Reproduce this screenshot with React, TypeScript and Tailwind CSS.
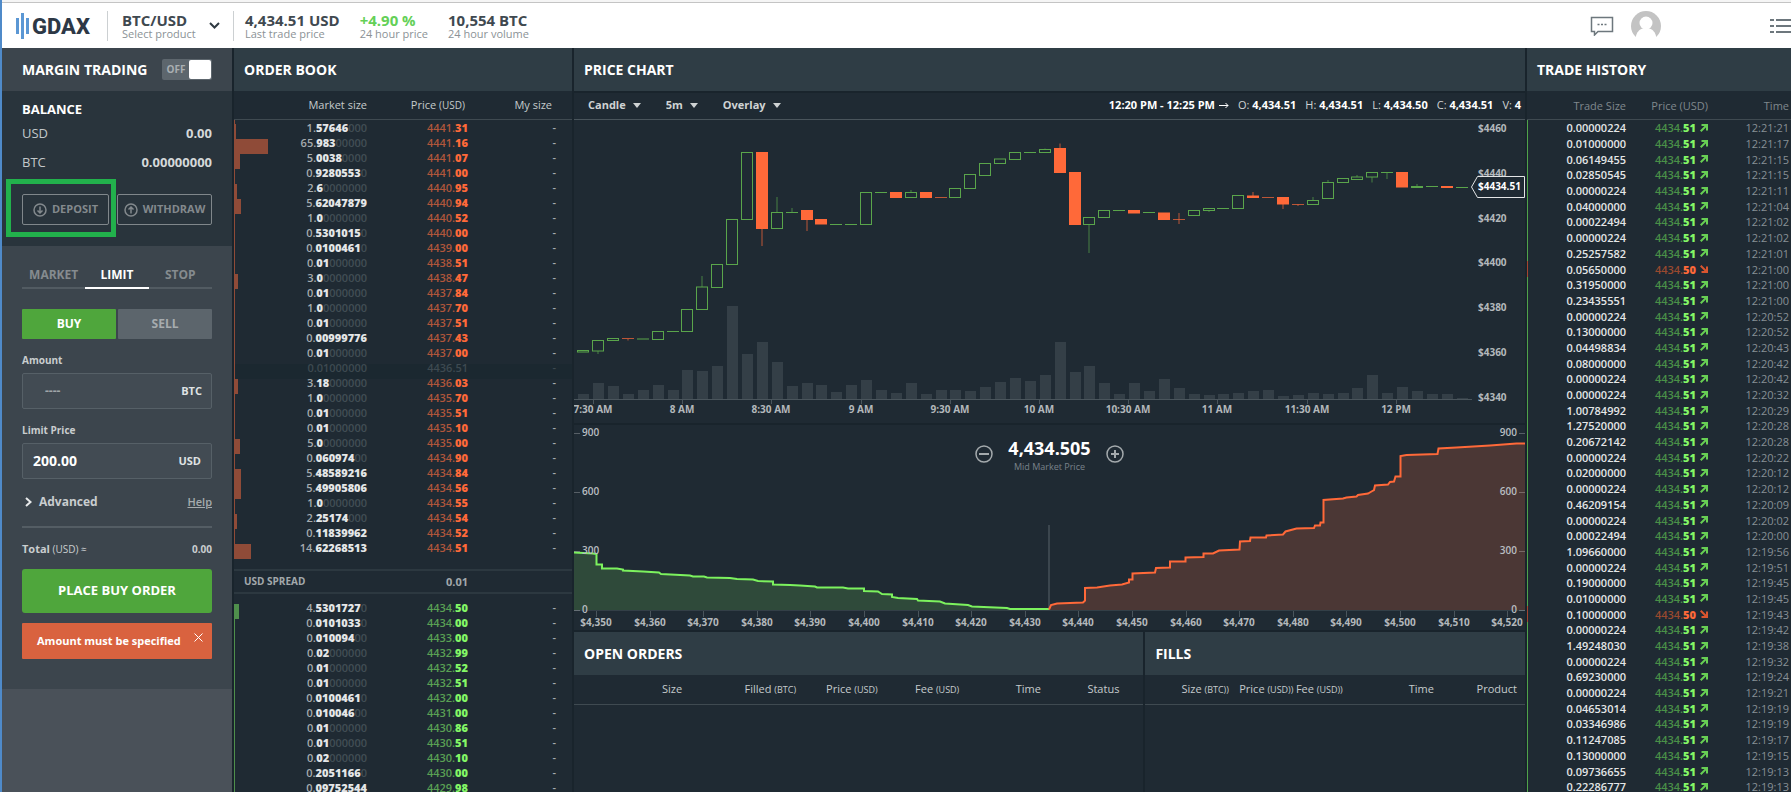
import { useState } from "react";

type Level = [size: string, price: string, bar: number];
type Trade = [size: string, time: string, down?: boolean];
type Candle = {
  up: boolean;
  top: number;
  bottom: number;
  high?: number;
  low?: number;
  volume: number;
};

const ASKS: Level[] = [
  ["1.57646000", "4441.31", 1],
  ["65.98300000", "4441.16", 33],
  ["5.00380000", "4441.07", 5],
  ["0.92805530", "4441.00", 0],
  ["2.60000000", "4440.95", 2],
  ["5.62047879", "4440.94", 6],
  ["1.00000000", "4440.52", 0],
  ["0.53010150", "4440.00", 0],
  ["0.01004610", "4439.00", 0],
  ["0.01000000", "4438.51", 0],
  ["3.00000000", "4438.47", 3],
  ["0.01000000", "4437.84", 0],
  ["1.00000000", "4437.70", 0],
  ["0.01000000", "4437.51", 0],
  ["0.00999776", "4437.43", 0],
  ["0.01000000", "4437.00", 0],
  ["0.01000000", "4436.51", 0],
  ["3.18000000", "4436.03", 3],
  ["1.00000000", "4435.70", 0],
  ["0.01000000", "4435.51", 0],
  ["0.01000000", "4435.10", 0],
  ["5.00000000", "4435.00", 5],
  ["0.06097400", "4434.90", 0],
  ["5.48589216", "4434.84", 6],
  ["5.49905806", "4434.56", 6],
  ["1.00000000", "4434.55", 0],
  ["2.25174000", "4434.54", 2],
  ["0.11839962", "4434.52", 0],
  ["14.62268513", "4434.51", 16],
];

const BIDS: Level[] = [
  ["4.53017270", "4434.50", 4],
  ["0.01010330", "4434.00", 0],
  ["0.01009400", "4433.00", 0],
  ["0.02000000", "4432.99", 0],
  ["0.01000000", "4432.52", 0],
  ["0.01000000", "4432.51", 0],
  ["0.01004610", "4432.00", 0],
  ["0.01004600", "4431.00", 0],
  ["0.01000000", "4430.86", 0],
  ["0.01000000", "4430.51", 0],
  ["0.02000000", "4430.10", 0],
  ["0.20511660", "4430.00", 0],
  ["0.09752544", "4429.98", 0],
];

// price of the level that is being removed from the book
const FADED_PRICE = "4436.51";

const TRADES: Trade[] = [
  ["0.00000224", "12:21:21"],
  ["0.01000000", "12:21:17"],
  ["0.06149455", "12:21:15"],
  ["0.02850545", "12:21:15"],
  ["0.00000224", "12:21:11"],
  ["0.04000000", "12:21:04"],
  ["0.00022494", "12:21:02"],
  ["0.00000224", "12:21:02"],
  ["0.25257582", "12:21:01"],
  ["0.05650000", "12:21:00", true],
  ["0.31950000", "12:21:00"],
  ["0.23435551", "12:21:00"],
  ["0.00000224", "12:20:52"],
  ["0.13000000", "12:20:52"],
  ["0.04498834", "12:20:43"],
  ["0.08000000", "12:20:42"],
  ["0.00000224", "12:20:42"],
  ["0.00000224", "12:20:32"],
  ["1.00784992", "12:20:29"],
  ["1.27520000", "12:20:28"],
  ["0.20672142", "12:20:28"],
  ["0.00000224", "12:20:22"],
  ["0.02000000", "12:20:12"],
  ["0.00000224", "12:20:12"],
  ["0.46209154", "12:20:09"],
  ["0.00000224", "12:20:02"],
  ["0.00022494", "12:20:00"],
  ["1.09660000", "12:19:56"],
  ["0.00000224", "12:19:51"],
  ["0.19000000", "12:19:45"],
  ["0.01000000", "12:19:45"],
  ["0.10000000", "12:19:43", true],
  ["0.00000224", "12:19:42"],
  ["1.49248030", "12:19:38"],
  ["0.00000224", "12:19:32"],
  ["0.69230000", "12:19:24"],
  ["0.00000224", "12:19:21"],
  ["0.04653014", "12:19:19"],
  ["0.03346986", "12:19:19"],
  ["0.11247085", "12:19:17"],
  ["0.13000000", "12:19:15"],
  ["0.09736655", "12:19:13"],
  ["0.22286777", "12:19:13"],
];

function up(top: number, bottom: number, volume: number, high?: number, low?: number): Candle {
  return { up: true, top, bottom, high, low, volume };
}

function down(top: number, bottom: number, volume: number, high?: number, low?: number): Candle {
  return { up: false, top, bottom, high, low, volume };
}

// one candle per five minutes, starting at 7:25
const CANDLES: Candle[] = [
  up(230.5, 232, 5),
  up(220.5, 231, 16, undefined, 234),
  up(218.5, 220.5, 13),
  down(218.5, 219, 5, undefined, 220.5),
  up(219, 219, 9),
  up(211.5, 219.5, 14),
  up(211.5, 211.5, 9),
  up(189.5, 211.5, 29),
  up(167, 189.5, 28, 156),
  up(144.5, 167.5, 33),
  up(99.5, 144.5, 93),
  up(32.5, 99.5, 45),
  down(32.5, 108.5, 57, undefined, 126),
  up(92.5, 108.5, 37, 77),
  up(92.5, 92.5, 13, 88),
  down(90.5, 99.5, 16, undefined, 111),
  down(99.5, 104, 14),
  up(104.5, 104.5, 7),
  up(104.5, 104.5, 14),
  up(72.5, 104.5, 19),
  up(72.5, 72.5, 9),
  down(72.5, 77.5, 6),
  up(72.5, 77.5, 16, 70),
  down(72.5, 77.5, 5),
  down(77.5, 77.5, 9),
  up(68.5, 77.5, 9),
  up(54.5, 68.5, 8),
  up(43.5, 55.5, 12),
  up(39, 43.5, 17),
  up(32.5, 39.5, 21),
  up(32.5, 32.5, 18),
  up(29.5, 32.5, 24, 28.5),
  down(28.5, 52.5, 57, 23.5),
  down(52.5, 104.5, 27),
  up(97.5, 104.5, 33, undefined, 133),
  up(90.5, 97.5, 16),
  up(90.5, 90.5, 5),
  down(90.5, 93, 16),
  up(92.5, 92.5, 8),
  down(93, 99.5, 20),
  down(99.5, 99.5, 11, 93, 104),
  up(90.5, 95.5, 5),
  up(88.5, 90.5, 4, undefined, 92),
  up(88.5, 88.5, 5),
  up(75.5, 88.5, 6),
  down(76, 77.5, 8, 72),
  down(77.5, 77.5, 9),
  down(77.5, 84, 3, undefined, 89),
  down(84.5, 84.5, 4, undefined, 86),
  up(80.5, 84.5, 6, 77),
  up(62.5, 78.5, 5, 60),
  up(58.5, 62.5, 6),
  up(57, 59.5, 11, 55),
  up(52.5, 57, 24, undefined, 62.5),
  up(52.5, 52.5, 6, undefined, 59),
  down(52.5, 67, 12),
  up(66.5, 67.5, 8, 64),
  up(66.5, 66.5, 5),
  down(66.5, 67.5, 5),
  up(67.5, 67.5, 1),
];

const TIMES = [
  "7:30 AM", "8 AM", "8:30 AM", "9 AM", "9:30 AM",
  "10 AM", "10:30 AM", "11 AM", "11:30 AM", "12 PM",
];
const PRICES = [4460, 4440, 4420, 4400, 4380, 4360, 4340];

const BID_POINTS =
  "0,127.5 19,128.5 22.5,129 22.5,139.5 28,139.5 28,143.5 43,143.5 49,144.5 49,145.5 69,146.5 85,147.5 87,149 116,150.5 119,151.5 130,151.5 133,152.5 156,153 163,154 179,154.5 184,156 199,156.5 199,159.5 216,160 226,160.5 241,161.5 243,162.5 269,162.5 274,163.5 290,163.5 290,166 304,166.5 308,169 318,169.5 318,172 324,173 343,174 344,175.5 366,176.5 371,178.5 394,180 398,181.5 433,183 436,184 475,184";
const ASK_POINTS =
  "475,184.5 477,180 483,178.5 509,177.5 511,175.5 511,163 523,162.5 536,160.5 548,159.5 555,157.5 555,154.5 558.5,154.5 558.5,148.5 581,147.5 582,143 596,142.5 596,136.5 611.5,136.5 611.5,132.5 629.5,132 629.5,128.5 639,128.5 645,125.5 665.5,124.5 666,116.5 676,116 676.5,112.5 692,112.5 692.5,110.5 709,109.5 711.5,106.5 722.5,103.5 740,103 741,100.5 746,100.5 746.5,97.5 749.5,97.5 749.5,75 769,73.5 772.5,72.5 782.5,71.5 784,70 794,68.5 797.5,66.5 800,65 801,60.5 814,59.5 816,57 820,56.5 821.5,51.5 826.5,51.5 826.5,31 832.5,30 863.5,29 864.5,23.5 882.5,22.5 916,20.5 942.5,18.5 951,18.5";

const DEPTH_LEVELS = [
  { label: "900", y: 8 },
  { label: "600", y: 67 },
  { label: "300", y: 126 },
  { label: "0", y: 185 },
];

function PanelHeader({ title }: { title: string }) {
  return (
    <h2 className="flex h-[43px] shrink-0 items-center bg-[#2f3d45] px-[10px] text-sm font-bold text-white">
      {title}
    </h2>
  );
}

function Logo() {
  return (
    <svg width="78" height="26" viewBox="0 0 78 26" role="img" aria-label="GDAX">
      <rect x="2" y="5" width="3" height="16" fill="#5b97d4" />
      <rect x="7" y="0" width="3" height="26" fill="#5b97d4" />
      <rect x="12" y="5" width="3" height="16" fill="#5b97d4" />
      <text x="18" y="21" fontFamily="Roboto, sans-serif" fontSize="22" fontWeight="800" fill="#2d3846">
        GDAX
      </text>
    </svg>
  );
}

function Header() {
  return (
    <header className="flex h-12 shrink-0 items-center border-t-2 border-[#f5f5f5] bg-white">
      <div className="flex h-full flex-1 items-center border-t border-[#c4c4c4]">
        <a href="#" className="ml-[12px]">
          <Logo />
        </a>

        <button
          type="button"
          className="ml-[15px] flex h-[30px] items-center border-x border-[#ccd0d2] pr-[13px] pl-[14px] text-left"
        >
          <span className="w-[87px]">
            <span className="block text-[15px] leading-4 font-bold text-[#3f4950]">BTC/USD</span>
            <span className="block text-[11px] leading-3 text-[#8b9296]">Select product</span>
          </span>
          <svg width="11" height="7" viewBox="0 0 11 7" fill="none" stroke="#2f3a42" strokeWidth="2">
            <path d="M1 1l4.500 4.500L10 1" />
          </svg>
        </button>

        <dl className="flex flex-1 gap-5 pl-[11px]">
          <Stat value="4,434.51 USD" label="Last trade price" />
          <Stat value="+4.90 %" label="24 hour price" positive />
          <Stat value="10,554 BTC" label="24 hour volume" />
        </dl>

        <button type="button" aria-label="Chat" className="mr-[17px]">
          <svg width="24" height="20" viewBox="0 0 24 20" fill="none" stroke="#6d777d" strokeWidth="1.500">
            <path d="M1.500 1.500h21v14H8l-3.500 3.500v-3.500h-3z" />
            <path d="M7.500 8.500h2M11 8.500h2M14.500 8.500h2" strokeWidth="1.500" />
          </svg>
        </button>
        <button type="button" aria-label="Account" className="mr-[109px]">
          <svg width="30" height="30" viewBox="0 0 30 30">
            <circle cx="15" cy="15" r="15" fill="#c3c3c3" />
            <circle cx="15" cy="12" r="6.500" fill="#fff" />
            <path d="M4.500 27c1-6 4-8.500 7-9.500h7c3 1 6 3.500 7 9.500l-4 3h-13z" fill="#fff" />
          </svg>
        </button>
        <button type="button" aria-label="Menu">
          <svg width="21" height="14" viewBox="0 0 21 14" stroke="#6d777d" strokeWidth="2">
            <path d="M0 1h4M6 1h15M0 7h4M6 7h15M0 13h4M6 13h15" />
          </svg>
        </button>
      </div>
    </header>
  );
}

function Stat({ value, label, positive }: { value: string; label: string; positive?: boolean }) {
  return (
    <div className="flex flex-col-reverse">
      <dt className="text-[11px] leading-3 text-[#8b9296]">{label}</dt>
      <dd
        className={
          positive
            ? "text-[15px] leading-4 font-bold text-[#64d057]"
            : "text-[15px] leading-4 font-bold text-[#3f4950]"
        }
      >
        {value}
      </dd>
    </div>
  );
}

function CircleArrow({ flip }: { flip?: boolean }) {
  return (
    <svg width="14" height="14" viewBox="0 0 14 14" fill="none" stroke="currentColor" strokeWidth="1.500">
      <circle cx="7" cy="7" r="6" />
      {flip ? <path d="M7 10.500V4M4.500 6.500L7 4l2.500 2.500" /> : <path d="M7 3.500V10M4.500 7.500L7 10l2.500-2.500" />}
    </svg>
  );
}

function Sidebar() {
  const [margin, setMargin] = useState(false);
  const [tab, setTab] = useState("LIMIT");
  const [side, setSide] = useState("BUY");
  const [amount, setAmount] = useState("");
  const [price, setPrice] = useState("200.00");
  const [showError, setShowError] = useState(true);

  return (
    <aside className="w-[230px] shrink-0 overflow-hidden bg-[#4a5159]">
      <div className="flex h-[43px] items-center justify-between bg-[#3c454d] px-5">
        <h2 className="text-sm font-bold text-white">MARGIN TRADING</h2>
        <label className="flex h-[21px] w-[50px] items-center rounded-xs bg-[#5d666d] p-px text-[10px] font-bold text-[#a9afb2]">
          <input
            type="checkbox"
            className="sr-only"
            aria-label="Margin trading"
            checked={margin}
            onChange={(e) => setMargin(e.target.checked)}
          />
          <span className="flex-1 text-center">{margin ? "ON" : "OFF"}</span>
          <span className="h-full w-[22px] rounded-xs bg-white" />
        </label>
      </div>

      <section className="bg-[#29343c] px-5 pt-[10px] pb-[21px] text-[13px] text-[#c3c8ca]">
        <h3 className="leading-4 font-bold text-white">BALANCE</h3>
        <dl>
          <div className="mt-[6px] flex justify-between leading-5">
            <dt>USD</dt>
            <dd className="font-bold text-[#d5d9da]">0.00</dd>
          </div>
          <div className="mt-[9px] flex justify-between leading-5">
            <dt>BTC</dt>
            <dd className="font-bold text-[#d5d9da]">0.00000000</dd>
          </div>
        </dl>
        <div className="mt-[22px] flex gap-2 text-[11px] font-bold text-[#83898d]">
          <div className="relative">
            <button
              type="button"
              className="flex h-[31px] w-[87px] items-center justify-center gap-[5px] rounded-xs border border-[#80878b]"
            >
              <CircleArrow />
              DEPOSIT
            </button>
            {/* tutorial highlight */}
            <span className="pointer-events-none absolute -top-[15px] -right-[7px] -bottom-3 -left-4 border-[5px] border-[#22b14c]" />
          </div>
          <button
            type="button"
            className="flex h-[31px] flex-1 items-center justify-center gap-[5px] rounded-xs border border-[#80878b]"
          >
            <CircleArrow flip />
            WITHDRAW
          </button>
        </div>
      </section>

      <form className="bg-[#3c454d] px-5 pt-[17px] pb-[30px] text-[#c9cdcf]" onSubmit={(e) => e.preventDefault()}>
        <div className="grid grid-cols-3 text-xs font-bold">
          {["MARKET", "LIMIT", "STOP"].map((name) => (
            <button
              key={name}
              type="button"
              onClick={() => setTab(name)}
              className={
                tab === name
                  ? "border-b-2 border-white leading-6 text-white"
                  : "border-b-2 border-[#525b62] leading-6 text-[#858b8f]"
              }
            >
              {name}
            </button>
          ))}
        </div>

        <div className="mt-5 grid grid-cols-2 gap-[2px] text-xs font-bold">
          {["BUY", "SELL"].map((name) => (
            <button
              key={name}
              type="button"
              onClick={() => setSide(name)}
              className={
                side === name
                  ? "h-[30px] rounded-[1px] bg-[#4fa63c] text-white"
                  : "h-[30px] rounded-[1px] bg-[#5c656c] text-[#a7acaf]"
              }
            >
              {name}
            </button>
          ))}
        </div>

        <label htmlFor="amount" className="mt-[13px] block text-[10px] leading-4 font-bold">
          Amount
        </label>
        <div className="mt-[5px] flex h-9 items-center rounded-xs border border-[#566067] bg-[#424b53] pr-[9px] pl-[22px]">
          <input
            id="amount"
            value={amount}
            placeholder="----"
            onChange={(e) => setAmount(e.target.value)}
            className="w-full min-w-0 text-xs font-bold text-white outline-none placeholder:text-[#a0a6a9]"
          />
          <span className="text-[11px] font-bold text-[#dfe2e3]">BTC</span>
        </div>

        <label htmlFor="price" className="mt-[13px] block text-[10px] leading-4 font-bold">
          Limit Price
        </label>
        <div className="mt-[5px] flex h-9 items-center rounded-xs border border-[#566067] bg-[#424b53] px-[10px]">
          <input
            id="price"
            value={price}
            onChange={(e) => setPrice(e.target.value)}
            className="w-full min-w-0 text-sm font-bold text-white outline-none"
          />
          <span className="text-[11px] font-bold text-[#dfe2e3]">USD</span>
        </div>

        <div className="mt-[13px] flex items-center justify-between border-b-2 border-[#545d64] pb-[14px]">
          <button type="button" className="flex items-center gap-[7px] pl-[3px] text-xs leading-5 font-bold">
            <svg width="7" height="10" viewBox="0 0 7 10" fill="none" stroke="#e8eaeb" strokeWidth="2">
              <path d="M1 1l4.500 4L1 9" />
            </svg>
            Advanced
          </button>
          <a href="#" className="text-[11px] font-semibold text-[#a5abae] underline">
            Help
          </a>
        </div>

        <div className="mt-[13px] flex justify-between text-[10px] leading-4 font-bold">
          <span>
            <span className="text-[11px]">Total</span> <span className="font-normal">(USD) ≈</span>
          </span>
          <span>0.00</span>
        </div>

        <button
          type="submit"
          className="mt-3 h-11 w-full rounded-[3px] bg-[#4fa63c] text-[13px] font-bold text-white"
        >
          PLACE {side} ORDER
        </button>

        {showError && (
          <div className="mt-[10px] flex h-9 rounded-[1px] bg-[#d9623f] pr-[9px] pl-[15px] text-white">
            <p role="alert" className="flex-1 self-center text-[11px] font-bold whitespace-nowrap">
              Amount must be specified
            </p>
            <button type="button" aria-label="Dismiss" className="h-7" onClick={() => setShowError(false)}>
              <svg width="9" height="9" viewBox="0 0 9 9" stroke="currentColor">
                <path d="M.5.5l8 8M8.500.5l-8 8" />
              </svg>
            </button>
          </div>
        )}
      </form>
    </aside>
  );
}

function BookRow({ level, ask }: { level: Level; ask?: boolean }) {
  const [size, price, bar] = level;
  const [whole, decimals] = size.split(".");
  const zeros = decimals.slice(1).match(/0*$/)![0];
  const filled = decimals.slice(0, decimals.length - zeros.length);
  const [dollars, cents] = price.split(".");
  const faded = price === FADED_PRICE;

  return (
    <tr className={faded ? "bg-[#1b2830] text-[#3e4a51]" : "text-[#a6acaf]"}>
      <td className={ask ? "border-l border-[#8f4b38] p-0" : "border-l border-[#4f8f4c] p-0"}>
        <div className={ask ? "h-[15px] bg-[#8f4b38]" : "h-[15px] bg-[#4f8f4c]"} style={{ width: bar }} />
      </td>
      <td className="p-0 text-right align-top leading-2 font-semibold">
        {faded ? (
          size
        ) : (
          <>
            {whole}.<b className="text-[#e4e6e7]">{filled}</b>
            <span className="text-[#424e55]">{zeros}</span>
          </>
        )}
      </td>
      <td className="p-0 text-right align-top leading-2 font-semibold">
        {faded ? (
          price
        ) : (
          <span className={ask ? "text-[#b0563b]" : "text-[#5aa054]"}>
            {dollars}.<b className={ask ? "text-[#ff6939]" : "text-[#84f766]"}>{cents}</b>
          </span>
        )}
      </td>
      <td className="p-0 pr-4 text-right align-top leading-2 font-semibold">-</td>
    </tr>
  );
}

function OrderBook() {
  return (
    <section className="w-[338px] shrink-0 overflow-hidden bg-[#1f2a33]">
      <PanelHeader title="ORDER BOOK" />
      <table className="w-full table-fixed border-separate border-spacing-0 text-[11px]" aria-label="Order book">
        <colgroup>
          <col className="w-[51px]" />
          <col className="w-[82px]" />
          <col className="w-[101px]" />
          <col />
        </colgroup>
        <thead>
          <tr className="h-[29px] text-right text-[#c5cacc]">
            <td className="border-b border-[#3f4a51] p-0" />
            <th className="border-b border-[#3f4a51] p-0 font-normal whitespace-nowrap">Market size</th>
            <th className="border-b border-[#3f4a51] p-0 pr-[3px] font-normal">
              Price <span className="text-[10px]">(USD)</span>
            </th>
            <th className="border-b border-[#3f4a51] p-0 pr-5 font-normal">My size</th>
          </tr>
        </thead>
        <tbody>
          <tr className="h-1">
            <td className="border-l border-[#8f4b38] p-0" />
          </tr>
          {ASKS.map((level) => (
            <BookRow key={level[1]} level={level} ask />
          ))}
        </tbody>
        <tbody>
          <tr>
            <th colSpan={2} className="py-[10px] pr-0 pl-0 text-left">
              <div className="border-y-2 border-[#2c3840] pl-[10px] text-[10px] leading-[21px] font-bold text-[#a2a8ab]">
                USD SPREAD
              </div>
            </th>
            <td className="px-0 py-[10px] text-right">
              <div className="border-y-2 border-[#2c3840] leading-[21px] font-bold text-[#a2a8ab]">0.01</div>
            </td>
            <td className="px-0 py-[10px]">
              <div className="h-[25px] border-y-2 border-[#2c3840]" />
            </td>
          </tr>
        </tbody>
        <tbody>
          {BIDS.map((level) => (
            <BookRow key={level[1]} level={level} />
          ))}
        </tbody>
      </table>
    </section>
  );
}

function Dropdown({ label, value }: { label: string; value: string }) {
  return (
    <div className="relative flex items-center">
      <select
        aria-label={label}
        className="field-sizing-content appearance-none pr-[15px] text-[11px] font-bold text-[#cfd3d4] outline-none"
      >
        <option>{value}</option>
      </select>
      <svg className="pointer-events-none absolute right-0" width="8" height="5" viewBox="0 0 8 5" fill="#cfd3d4">
        <path d="M0 0h8L4 5z" />
      </svg>
    </div>
  );
}

function Ohlc({ name, value }: { name: string; value: string }) {
  return (
    <span>
      <span className="font-normal text-[#cfd3d4]">{name}:</span> {value}
    </span>
  );
}

function PriceChart() {
  return (
    <svg viewBox="0 0 951 303" className="block w-full shrink-0 bg-[#1f2a33]" role="img" aria-label="Price chart">
      {CANDLES.map((candle, i) => {
        const x = Math.round(9.2 + i * 14.89 - 6);
        const color = candle.up ? "#5aa54b" : "#ff6939";
        const height = candle.bottom - candle.top;
        return (
          <g key={i}>
            <rect x={x + 1} y={279 - candle.volume} width="11" height={candle.volume} fill="#343f47" />
            {candle.high !== undefined && (
              <path d={`M${x + 6} ${candle.high}V${candle.top}`} stroke={color} strokeOpacity="0.7" />
            )}
            {candle.low !== undefined && (
              <path d={`M${x + 6} ${candle.bottom}V${candle.low}`} stroke={color} strokeOpacity="0.7" />
            )}
            {height < 1 ? (
              <path
                d={`M${x} ${candle.top}h12`}
                stroke={color}
                strokeOpacity={candle.up ? 1 : 0.7}
              />
            ) : candle.up ? (
              <rect x={x + 0.5} y={candle.top} width="11" height={height} fill="none" stroke={color} />
            ) : (
              <rect x={x} y={candle.top - 0.5} width="12" height={height + 1} fill={color} />
            )}
          </g>
        );
      })}

      <path d="M0 279.500H898" stroke="#4a555c" />
      <g fontSize="10" fontWeight="700" fill="#b3b8bb" textAnchor="middle">
        {TIMES.map((time, i) => {
          const x = Math.round(19 + i * 89.2);
          return (
            <g key={time}>
              <path d={`M${x + 0.5} 280v4`} stroke="#4a555c" />
              <text x={x} y="293">
                {time}
              </text>
            </g>
          );
        })}
      </g>
      <g fontSize="10" fontWeight="700" fill="#b3b8bb">
        {PRICES.map((price, i) => (
          <text key={price} x="904" y={Math.round(12 + i * 44.8)}>
            ${price}
          </text>
        ))}
      </g>
      <path d="M897.500 67L903.500 56.500H950.500V77.500H903.500z" fill="#1f2a33" fillOpacity="0.8" stroke="#e3e5e6" />
      <text x="904" y="70" fontSize="10" fontWeight="700" fill="#fff">
        $4434.51
      </text>
    </svg>
  );
}

function DepthChart() {
  return (
    <div className="relative shrink-0 bg-[#1f2a33]">
      <svg viewBox="0 0 951 205" className="block w-full" role="img" aria-label="Depth chart">
        <polygon points={`${BID_POINTS} 475,185 0,185`} fill="#2f4a3a" />
        <polygon points={`${ASK_POINTS} 951,185 475,185`} fill="#4b3735" />
        <path d="M475 100V184" stroke="#3b464e" strokeWidth="2" />
        <path d="M0 185.500H951" stroke="#333f47" />
        <polyline points={BID_POINTS} fill="none" stroke="#7cf25e" strokeWidth="2" />
        <polyline points={ASK_POINTS} fill="none" stroke="#ff6939" strokeWidth="2" />
        <g stroke="#fff" strokeOpacity="0.25">
          {DEPTH_LEVELS.map(({ label, y }) => (
            <path key={label} d={`M0 ${y + 0.5}h6M945 ${y + 0.5}h6`} />
          ))}
        </g>
        <g fontSize="10" fontWeight="600" fill="#b9bec1">
          {DEPTH_LEVELS.map(({ label, y }) => (
            <g key={label}>
              <text x="8" y={y + 3}>
                {label}
              </text>
              <text x="943" y={y + 3} textAnchor="end">
                {label}
              </text>
            </g>
          ))}
        </g>
        <g fontSize="10" fontWeight="700" fill="#b3b8bb" textAnchor="middle">
          {Array.from({ length: 18 }, (_, i) => {
            const x = Math.round(22 + i * 53.6);
            return (
              <g key={i}>
                <path d={`M${x + 0.5} 186v6`} stroke="#4a555c" />
                <text x={x} y="201">
                  ${(4350 + i * 10).toLocaleString("en-US")}
                </text>
              </g>
            );
          })}
        </g>
      </svg>

      <div className="absolute inset-x-0 top-[11px] flex justify-center gap-[15px]">
        <button type="button" aria-label="Zoom out" className="mt-[9px] self-start">
          <svg width="18" height="18" viewBox="0 0 18 18" fill="none" stroke="#a4aaad" strokeWidth="1.500">
            <circle cx="9" cy="9" r="8" />
            <path d="M4 9h10" strokeWidth="2" />
          </svg>
        </button>
        <div className="text-center">
          <div className="text-lg leading-6 font-bold text-white">4,434.505</div>
          <div className="text-[9px] leading-[14px] text-[#79828a]">Mid Market Price</div>
        </div>
        <button type="button" aria-label="Zoom in" className="mt-[9px] self-start">
          <svg width="18" height="18" viewBox="0 0 18 18" fill="none" stroke="#a4aaad" strokeWidth="1.500">
            <circle cx="9" cy="9" r="8" />
            <path d="M5 9h8M9 5v8" strokeWidth="2" />
          </svg>
        </button>
      </div>
    </div>
  );
}

function Unit({ children }: { children: string }) {
  return <span className="text-[9px]">{children}</span>;
}

function OpenOrders() {
  return (
    <section className="min-w-0 bg-[#1f2a33]">
      <PanelHeader title="OPEN ORDERS" />
      <table className="w-full table-fixed text-[11px]" aria-label="Open orders">
        <thead>
          <tr className="h-[29px] border-b border-[#3f4a51] text-right whitespace-nowrap text-[#c5cacc]">
            <th className="w-[19%] p-0 font-normal">Size</th>
            <th className="w-[20%] p-0 font-normal">
              Filled <Unit>(BTC)</Unit>
            </th>
            <th className="p-0 font-normal">
              Price <Unit>(USD)</Unit>
            </th>
            <th className="p-0 font-normal">
              Fee <Unit>(USD)</Unit>
            </th>
            <th className="p-0 font-normal">Time</th>
            <th className="w-[18%] p-0 pr-6 font-normal">Status</th>
          </tr>
        </thead>
      </table>
    </section>
  );
}

function Fills() {
  return (
    <section className="min-w-0 bg-[#1f2a33]">
      <PanelHeader title="FILLS" />
      <table className="w-full table-fixed text-[11px]" aria-label="Fills">
        <thead>
          <tr className="h-[29px] border-b border-[#3f4a51] text-right whitespace-nowrap text-[#c5cacc]">
            <th className="w-[22%] p-0 font-normal">
              Size <Unit>(BTC))</Unit>
            </th>
            <th className="w-[17%] p-0 font-normal">
              Price <Unit>(USD))</Unit>
            </th>
            <th className="w-[13%] p-0 font-normal">
              Fee <Unit>(USD))</Unit>
            </th>
            <th className="w-[24%] p-0 font-normal">Time</th>
            <th className="p-0 pr-2 font-normal">Product</th>
          </tr>
        </thead>
      </table>
    </section>
  );
}

function TradeRow({ trade }: { trade: Trade }) {
  const [size, time, isDown] = trade;

  return (
    <tr className="text-right">
      <td
        className={
          isDown
            ? "border-l border-[#a5442f] p-0 font-semibold text-[#e4e6e7]"
            : "border-l border-[#4fa34a] p-0 font-semibold text-[#e4e6e7]"
        }
      >
        {size}
      </td>
      <td className="p-0">
        <span className="flex items-center justify-end gap-1 font-semibold">
          {isDown ? (
            <span className="text-[#99492f]">
              4434.<b className="text-[#ff6939]">50</b>
            </span>
          ) : (
            <span className="text-[#4a9048]">
              4434.<b className="text-[#84f766]">51</b>
            </span>
          )}
          <svg
            width="8"
            height="8"
            viewBox="0 0 8 8"
            fill="none"
            stroke={isDown ? "#d9552f" : "#68cf54"}
            strokeWidth="2"
          >
            {isDown ? <path d="M.7.7L7 7M7 1.500V7H1.500" /> : <path d="M.7 7.300L7 1M1.500 1H7v5.500" />}
          </svg>
        </span>
      </td>
      <td className="p-0 pr-[2px] text-[#879096]">{time}</td>
    </tr>
  );
}

function TradeHistory() {
  return (
    <section className="w-[264px] shrink-0 overflow-hidden bg-[#1f2a33]">
      <PanelHeader title="TRADE HISTORY" />
      <table
        className="h-[704px] w-full table-fixed border-separate border-spacing-0 text-[11px] leading-[15px]"
        aria-label="Trade history"
      >
        <thead>
          <tr className="h-[29px] text-right text-[#7f888d]">
            <th className="w-[99px] border-b border-[#3f4a51] p-0 font-normal">Trade Size</th>
            <th className="w-[82px] border-b border-[#3f4a51] p-0 font-normal">Price (USD)</th>
            <th className="border-b border-[#3f4a51] p-0 pr-[2px] font-normal">Time</th>
          </tr>
        </thead>
        <tbody>
          {TRADES.map((trade, i) => (
            <TradeRow key={i} trade={trade} />
          ))}
        </tbody>
      </table>
    </section>
  );
}

export default function App() {
  return (
    <div className="flex h-screen flex-col overflow-hidden border-l-2 border-[#4f8ac9] bg-[#19242c] font-['Open_Sans',sans-serif]">
      <Header />
      <main className="flex min-h-0 flex-1 gap-[2px]">
        <Sidebar />
        <OrderBook />
        <div className="flex min-w-0 flex-1 flex-col gap-[2px]">
          <PanelHeader title="PRICE CHART" />
          <div>
            <div className="flex h-[27px] items-center justify-between border-b border-[#4a555c] bg-[#1f2a33] pr-1 pb-px pl-[14px]">
              <div className="flex gap-[25px]">
                <Dropdown label="Chart type" value="Candle" />
                <Dropdown label="Interval" value="5m" />
                <Dropdown label="Indicator" value="Overlay" />
              </div>
              <div className="flex gap-[9px] text-[11px] font-bold whitespace-nowrap text-white">
                <span className="flex items-center gap-1">
                  12:20 PM - 12:25 PM
                  <svg width="10" height="7" viewBox="0 0 10 7" fill="none" stroke="currentColor">
                    <path d="M0 3.500h9M6.500 1L9 3.500L6.500 6" />
                  </svg>
                </span>
                <Ohlc name="O" value="4,434.51" />
                <Ohlc name="H" value="4,434.51" />
                <Ohlc name="L" value="4,434.50" />
                <Ohlc name="C" value="4,434.51" />
                <Ohlc name="V" value="4" />
              </div>
            </div>
            <PriceChart />
          </div>
          <DepthChart />
          <div className="grid min-h-0 flex-1 grid-cols-[3fr_2fr] gap-[2px]">
            <OpenOrders />
            <Fills />
          </div>
        </div>
        <TradeHistory />
      </main>
    </div>
  );
}
